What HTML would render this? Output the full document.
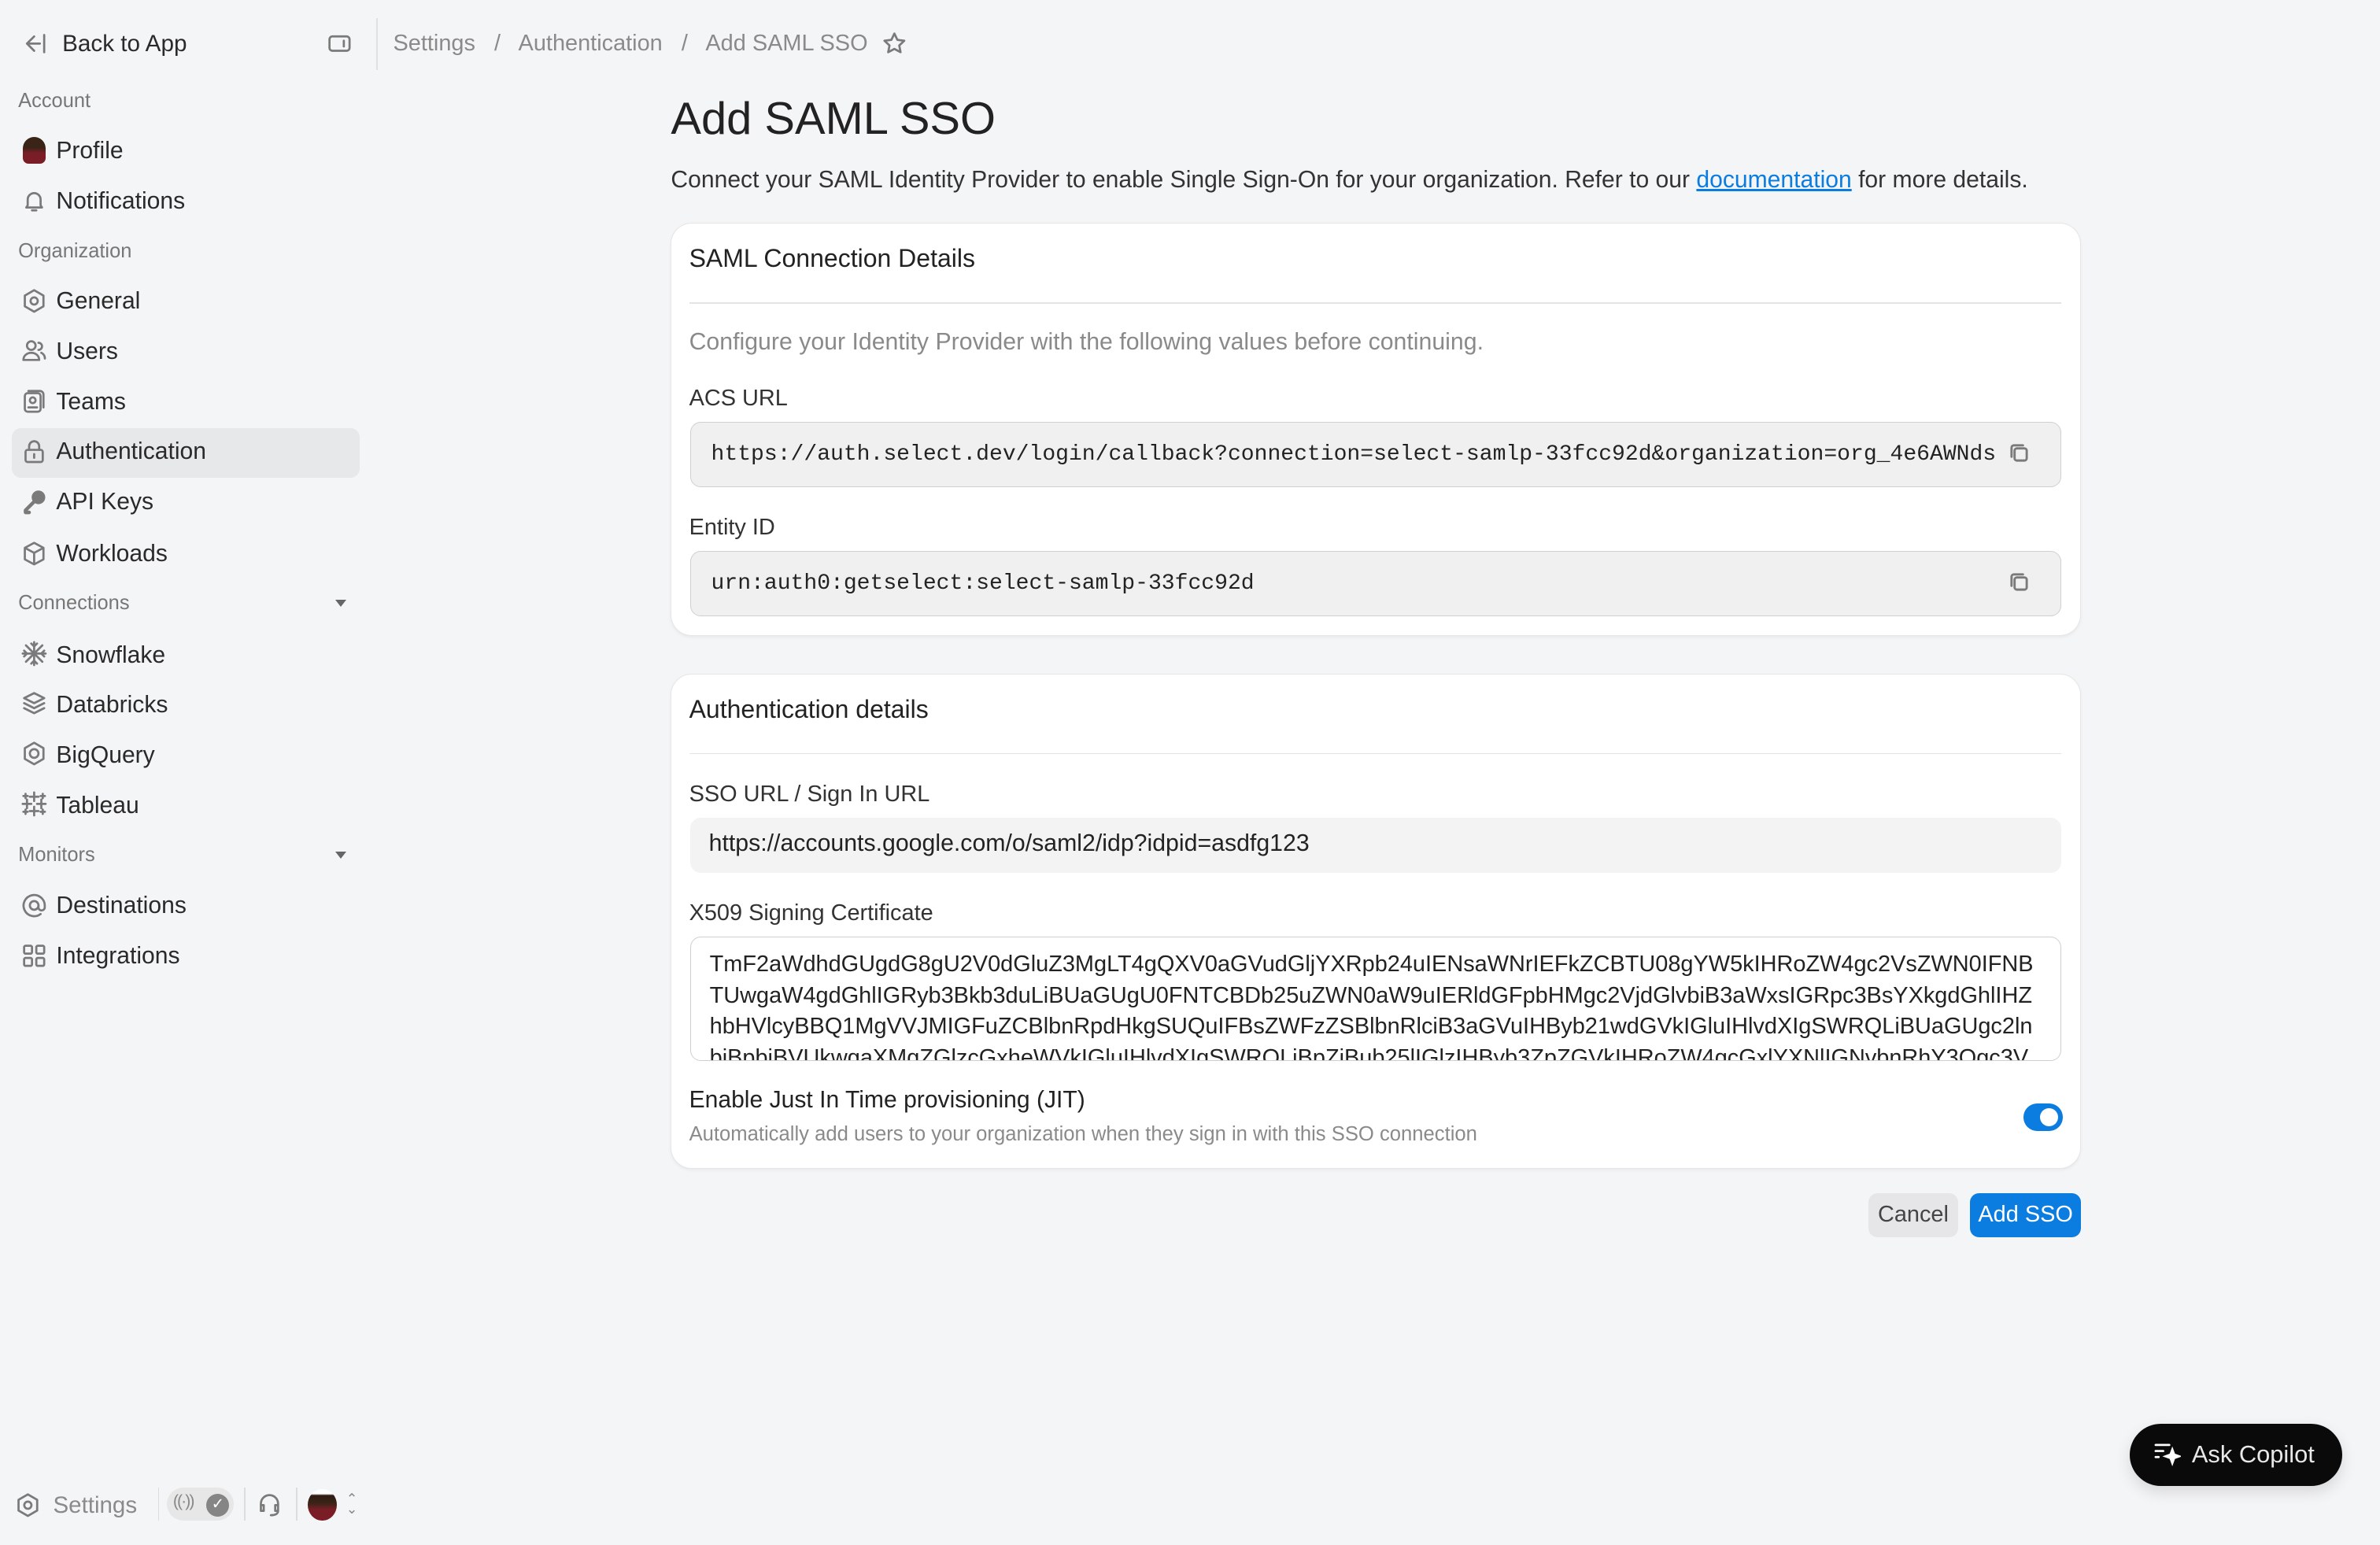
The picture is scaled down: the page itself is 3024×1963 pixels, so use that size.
<!DOCTYPE html>
<html><head><meta charset="utf-8"><style>
*{box-sizing:border-box;margin:0;padding:0}
html,body{width:3024px;height:1963px;overflow:hidden;background:#f4f5f7}
#w{zoom:1.92857;width:1568px;height:1018px;position:relative;font-family:"Liberation Sans",sans-serif;color:#1f1f1f}
.a{position:absolute;white-space:nowrap}
.nav{font-size:15.6px;color:#2a2a2a}
.sec{font-size:13.2px;color:#777}
.ic{position:absolute;width:17px;height:17px;fill:none;stroke:#7a7a7a;stroke-width:1.5;stroke-linecap:round;stroke-linejoin:round}
.card{position:absolute;left:442px;width:929px;background:#fff;border:1px solid #e6e6e6;border-radius:14px;box-shadow:0 1px 2px rgba(0,0,0,.05)}
.inp{position:absolute;left:455px;width:903px;background:#f0f0f0;border:1px solid #cfcfcf;border-radius:7px;font-family:"Liberation Mono",monospace;font-size:14.55px;color:#222;padding-left:13px;display:flex;align-items:center}
.lbl{font-size:15px;color:#333}
.copy{position:absolute;right:20px;top:13px;width:14px;height:14px}
</style></head><body><div id="w">
<!-- sidebar -->
<svg class="ic" style="left:14px;top:20px" viewBox="0 0 18 18"><path d="M9 4L4 9l5 5M4 9h9M16 3v12"/></svg>
<div class="a nav" style="left:41px;top:20px;font-size:15.4px">Back to App</div>
<svg class="ic" style="left:215px;top:20px" viewBox="0 0 18 18"><rect x="2" y="4" width="14" height="10" rx="2"/><path d="M12 7v4"/></svg>
<div class="a" style="left:248px;top:12px;width:1px;height:34px;background:#e0e0e0"></div>
<div class="a" style="left:259px;top:20px;font-size:15px;color:#8a8a8a">Settings &nbsp;&nbsp;/&nbsp;&nbsp; Authentication &nbsp;&nbsp;/&nbsp;&nbsp; Add SAML SSO</div>
<svg class="ic" style="left:581px;top:20px" viewBox="0 0 18 18"><path d="M9 2l2.1 4.4 4.8.6-3.5 3.3.9 4.7L9 12.7 4.7 15l.9-4.7L2.1 7l4.8-.6z"/></svg>

<div class="a sec" style="left:12px;top:59px">Account</div>
<div class="a" style="left:15px;top:90px;width:15px;height:18px;border-radius:8px 8px 4px 4px;background:linear-gradient(#3a2418 40%,#7a1d26 60%)"></div>
<div class="a nav" style="left:37px;top:91px">Profile</div>
<svg class="ic" style="left:14px;top:124px" viewBox="0 0 18 18"><path d="M4.5 12V8a4.5 4.5 0 019 0v4l1 1.5h-11zM7.5 15.5h3"/></svg>
<div class="a nav" style="left:37px;top:124px">Notifications</div>
<div class="a sec" style="left:12px;top:158px">Organization</div>
<svg class="ic" style="left:14px;top:190px" viewBox="0 0 18 18"><path d="M9 1.5l6.5 3.75v7.5L9 16.5l-6.5-3.75v-7.5z"/><circle cx="9" cy="9" r="2.5"/></svg>
<div class="a nav" style="left:37px;top:190px">General</div>
<svg class="ic" style="left:14px;top:223px" viewBox="0 0 18 18"><circle cx="7" cy="5" r="3"/><path d="M1.5 15c0-3 2.5-5 5.5-5s5.5 2 5.5 5zM12 3a2.5 2.5 0 010 5M14 10c1.5.8 2.5 2.3 2.5 4"/></svg>
<div class="a nav" style="left:37px;top:223px">Users</div>
<svg class="ic" style="left:14px;top:256px" viewBox="0 0 18 18"><rect x="2.5" y="3" width="11" height="13" rx="2"/><path d="M5 1.5h8a2.5 2.5 0 012.5 2.5v9"/><circle cx="8" cy="8" r="2"/><path d="M5 13h6"/></svg>
<div class="a nav" style="left:37px;top:256px">Teams</div>
<div class="a" style="left:8px;top:282px;width:229px;height:33px;background:#e7e8ea;border-radius:6px"></div>
<svg class="ic" style="left:14px;top:289px" viewBox="0 0 18 18"><rect x="3" y="8" width="12" height="8.5" rx="1.5"/><path d="M5.5 8V5.5a3.5 3.5 0 017 0V8M9 11v2.5"/></svg>
<div class="a nav" style="left:37px;top:289px">Authentication</div>
<svg class="ic" style="left:14px;top:322px" viewBox="0 0 18 18"><circle cx="12" cy="6" r="4" fill="#7a7a7a"/><path d="M9 9l-6 6v1.5h2.5" stroke-width="2.5"/></svg>
<div class="a nav" style="left:37px;top:322px">API Keys</div>
<svg class="ic" style="left:14px;top:356px" viewBox="0 0 18 18"><path d="M9 1.5l6.5 3.5v8L9 16.5 2.5 13V5zM2.5 5L9 8.5 15.5 5M9 8.5v8"/></svg>
<div class="a nav" style="left:37px;top:356px">Workloads</div>
<div class="a sec" style="left:12px;top:390px">Connections</div>
<div class="a" style="left:221px;top:395px;border:4px solid transparent;border-top:5px solid #666"></div>
<svg class="ic" style="left:14px;top:422px" viewBox="0 0 18 18"><path d="M9 1v16M1 9h16M3.3 3.3l11.4 11.4M14.7 3.3L3.3 14.7M7 2l2 2 2-2M7 16l2-2 2 2M2 7l2 2-2 2M16 7l-2 2 2 2"/></svg>
<div class="a nav" style="left:37px;top:423px">Snowflake</div>
<svg class="ic" style="left:14px;top:455px" viewBox="0 0 18 18"><path d="M9 2l7 3.5-7 3.5-7-3.5zM2 9l7 3.5L16 9M2 12.5L9 16l7-3.5"/></svg>
<div class="a nav" style="left:37px;top:456px">Databricks</div>
<svg class="ic" style="left:14px;top:488px" viewBox="0 0 18 18"><path d="M9 1.5l6.5 3.75v7.5L9 16.5l-6.5-3.75v-7.5z"/><circle cx="9" cy="9" r="3"/></svg>
<div class="a nav" style="left:37px;top:489px">BigQuery</div>
<svg class="ic" style="left:14px;top:521px" viewBox="0 0 18 18"><path d="M9 1v6M6 4h6M9 11v6M6 14h6M1 9h6M4 6v6M11 9h6M14 6v6M3 2v3M1.5 3.5h3M15 2v3M13.5 3.5h3M3 13v3M1.5 14.5h3M15 13v3M13.5 14.5h3"/></svg>
<div class="a nav" style="left:37px;top:522px">Tableau</div>
<div class="a sec" style="left:12px;top:556px">Monitors</div>
<div class="a" style="left:221px;top:561px;border:4px solid transparent;border-top:5px solid #666"></div>
<svg class="ic" style="left:14px;top:588px" viewBox="0 0 18 18"><circle cx="9" cy="9" r="3"/><path d="M12 9v1.3a2.2 2.2 0 004.4 0V9A7.4 7.4 0 1013.5 15"/></svg>
<div class="a nav" style="left:37px;top:588px">Destinations</div>
<svg class="ic" style="left:14px;top:621px" viewBox="0 0 18 18"><rect x="2" y="2" width="5.5" height="5.5" rx="1"/><rect x="10.5" y="2" width="5.5" height="5.5" rx="1"/><rect x="2" y="10.5" width="5.5" height="5.5" rx="1"/><rect x="10.5" y="10.5" width="5.5" height="5.5" rx="1"/></svg>
<div class="a nav" style="left:37px;top:621px">Integrations</div>

<!-- bottom bar -->
<svg class="ic" style="left:10px;top:983px" viewBox="0 0 18 18"><path d="M9 1.5l6.5 3.75v7.5L9 16.5l-6.5-3.75v-7.5z"/><circle cx="9" cy="9" r="2.5"/></svg>
<div class="a" style="left:35px;top:983px;font-size:15.3px;color:#8a8a8a">Settings</div>
<div class="a" style="left:104px;top:980px;width:1px;height:22px;background:#ddd"></div>
<div class="a" style="left:110px;top:980px;width:44px;height:22px;border-radius:11px;background:#e7e7e7"></div>
<div class="a" style="left:114px;top:983px;font-size:11px;color:#888;letter-spacing:-1px">((·))</div>
<div class="a" style="left:136px;top:984px;width:15px;height:15px;border-radius:50%;background:#858585;color:#fff;font-size:10px;text-align:center;line-height:15px">✓</div>
<div class="a" style="left:161px;top:980px;width:1px;height:22px;background:#ddd"></div>
<svg class="ic" style="left:169px;top:983px" viewBox="0 0 18 18"><path d="M3 11V8a6 6 0 0112 0v3M3 9h2v4H3zM13 9h2v4h-2zM15 13c0 2-2 3-5 3"/></svg>
<div class="a" style="left:195px;top:980px;width:1px;height:22px;background:#ddd"></div>
<div class="a" style="left:203px;top:981px;width:19px;height:21px;border-radius:50%;background:linear-gradient(#fff 15%,#2e1a12 20%,#3a2418 45%,#7a1d26 65%)"></div>
<div class="a" style="left:228px;top:984px;font-size:9px;color:#888;line-height:7px">⌃<br>⌄</div>

<!-- main -->
<div class="a" style="left:442px;top:61px;font-size:30px;color:#222">Add SAML SSO</div>
<div class="a" style="left:442px;top:110px;font-size:15.6px;color:#333">Connect your SAML Identity Provider to enable Single Sign-On for your organization. Refer to our <span style="color:#0b7de0;text-decoration:underline">documentation</span> for more details.</div>

<div class="card" style="top:147px;height:272px"></div>
<div class="a" style="left:454px;top:161px;font-size:16.6px;color:#222">SAML Connection Details</div>
<div class="a" style="left:454px;top:199px;width:904px;height:1px;background:#e4e4e4"></div>
<div class="a" style="left:454px;top:217px;font-size:15.7px;color:#8a8a8a">Configure your Identity Provider with the following values before continuing.</div>
<div class="a lbl" style="left:454px;top:254px">ACS URL</div>
<div class="inp" style="top:278px;height:43px">https://auth.select.dev/login/callback?connection=select-samlp-33fcc92d&amp;organization=org_4e6AWNds
<svg class="ic copy" viewBox="0 0 14 14"><rect x="4" y="4" width="8" height="8" rx="1.5"/><path d="M2 9.5V3.5A1.5 1.5 0 013.5 2h6"/></svg></div>
<div class="a lbl" style="left:454px;top:339px">Entity ID</div>
<div class="inp" style="top:363px;height:43px">urn:auth0:getselect:select-samlp-33fcc92d
<svg class="ic copy" viewBox="0 0 14 14"><rect x="4" y="4" width="8" height="8" rx="1.5"/><path d="M2 9.5V3.5A1.5 1.5 0 013.5 2h6"/></svg></div>

<div class="card" style="top:444px;height:326px"></div>
<div class="a" style="left:454px;top:458px;font-size:16.6px;color:#222">Authentication details</div>
<div class="a" style="left:454px;top:496px;width:904px;height:1px;background:#e4e4e4"></div>
<div class="a lbl" style="left:454px;top:515px">SSO URL / Sign In URL</div>
<div class="a" style="left:455px;top:539px;width:903px;height:36px;background:#f3f3f3;border-radius:7px;font-size:15.7px;color:#222;padding:8px 12px">https://accounts.google.com/o/saml2/idp?idpid=asdfg123</div>
<div class="a lbl" style="left:454px;top:593px">X509 Signing Certificate</div>
<div class="a" style="left:455px;top:617px;width:903px;height:82px;border:1px solid #cfcfcf;border-radius:7px;overflow:hidden;font-size:15px;line-height:20.5px;color:#222;padding:8px 12px;white-space:normal;word-break:break-all">TmF2aWdhdGUgdG8gU2V0dGluZ3MgLT4gQXV0aGVudGljYXRpb24uIENsaWNrIEFkZCBTU08gYW5kIHRoZW4gc2VsZWN0IFNBTUwgaW4gdGhlIGRyb3Bkb3duLiBUaGUgU0FNTCBDb25uZWN0aW9uIERldGFpbHMgc2VjdGlvbiB3aWxsIGRpc3BsYXkgdGhlIHZhbHVlcyBBQ1MgVVJMIGFuZCBlbnRpdHkgSUQuIFBsZWFzZSBlbnRlciB3aGVuIHByb21wdGVkIGluIHlvdXIgSWRQLiBUaGUgc2lnbiBpbiBVUkwgaXMgZGlzcGxheWVkIGluIHlvdXIgSWRQLiBpZiBub25lIGlzIHByb3ZpZGVkIHRoZW4gcGxlYXNlIGNvbnRhY3Qgc3VwcG9ydC4gV2UgY2FuIGhlbHAgeW91IHNldCB1cCB5b3VyIGNvbm5lY3Rpb24u</div>
<div class="a" style="left:454px;top:716px;font-size:15.6px;color:#222">Enable Just In Time provisioning (JIT)</div>
<div class="a" style="left:454px;top:740px;font-size:13.3px;color:#8a8a8a">Automatically add users to your organization when they sign in with this SSO connection</div>
<div class="a" style="left:1333px;top:727px;width:26px;height:18px;border-radius:9px;background:#0b7de0"></div>
<div class="a" style="left:1344px;top:730px;width:12px;height:12px;border-radius:50%;background:#fff"></div>

<div class="a" style="left:1231px;top:786px;width:59px;height:29px;border-radius:6px;background:#e6e6e8;font-size:15px;color:#444;text-align:center;line-height:29px">Cancel</div>
<div class="a" style="left:1298px;top:786px;width:73px;height:29px;border-radius:6px;background:#0b7de0;font-size:15px;color:#fff;text-align:center;line-height:29px">Add SSO</div>

<div class="a" style="left:1403px;top:938px;width:140px;height:41px;border-radius:21px;background:#0a0a0a;box-shadow:0 4px 10px rgba(0,0,0,.12)"></div>
<svg class="a" style="left:1419px;top:950px;width:18px;height:17px" viewBox="0 0 18 17" fill="none" stroke="#fff" stroke-width="1.4" stroke-linecap="round"><path d="M1 2h9M1 6h5M1 10h2"/><path d="M12 5l1.2 3.3L16.5 9.5l-3.3 1.2L12 14l-1.2-3.3L7.5 9.5l3.3-1.2z" fill="#fff"/></svg>
<div class="a" style="left:1444px;top:949px;font-size:16px;color:#e8e8e8">Ask Copilot</div>
</div></body></html>
